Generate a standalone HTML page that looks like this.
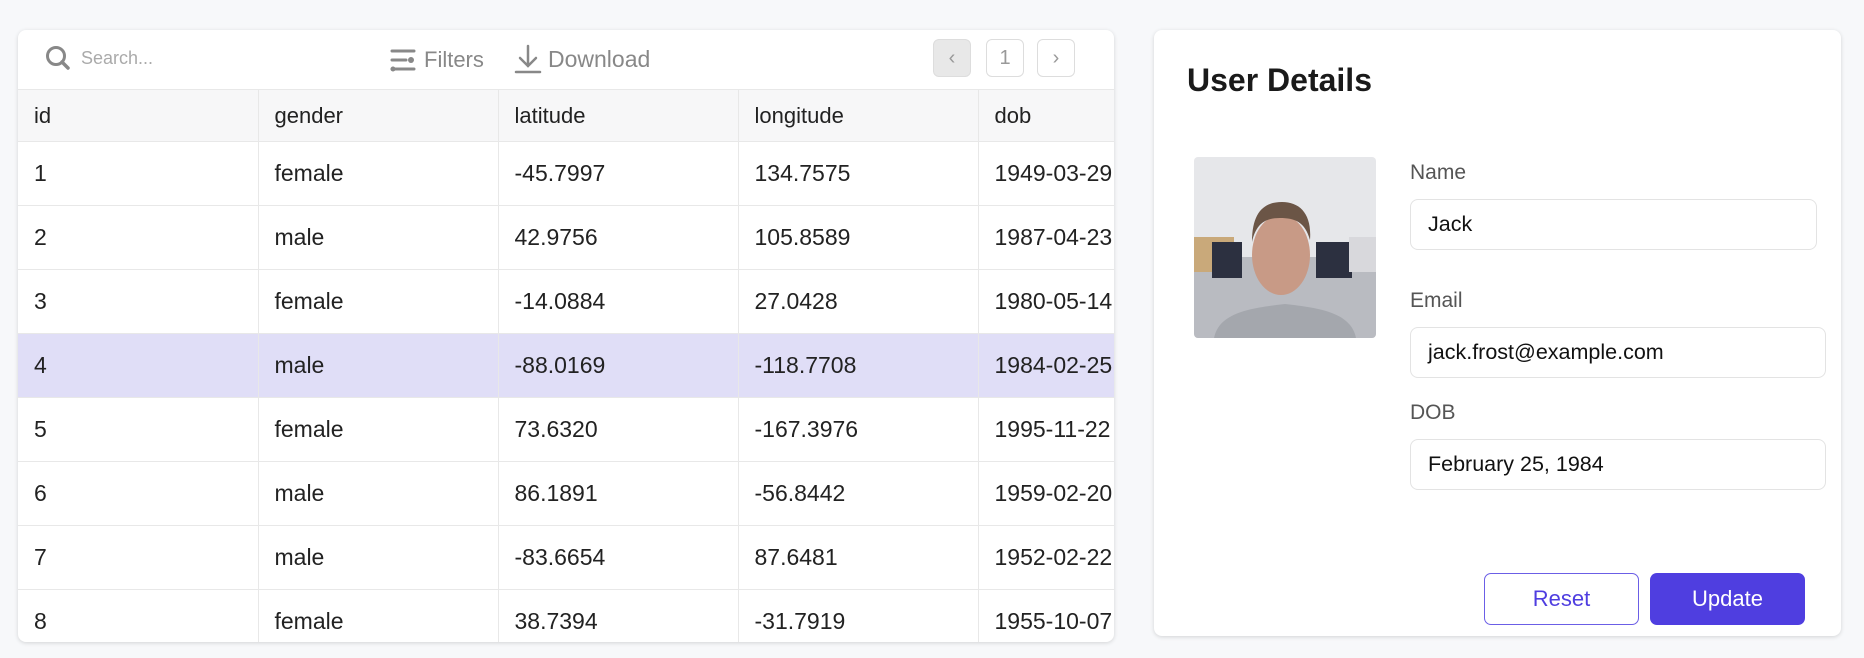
<!DOCTYPE html>
<html><head><style>
*{box-sizing:border-box;margin:0;padding:0}
body{width:1864px;height:658px;background:#f7f8fa;font-family:"Liberation Sans",sans-serif;position:relative;overflow:hidden;color:#222}
.card{position:absolute;background:#fff;border-radius:8px;box-shadow:0 1px 4px rgba(0,0,0,.15)}
#t{left:18px;top:30px;width:1096px;height:612px;overflow:hidden}
.tb{height:59px;position:relative;color:#888;font-size:22px}
table{border-collapse:collapse;table-layout:fixed;width:1120px;position:absolute;top:59px;left:0}
td{width:240px;border-right:1px solid #e8e8e8;border-bottom:1px solid #e8e8e8;padding-left:16px;font-size:23px;white-space:nowrap;overflow:hidden;height:64px;color:#222}
tr.h td{background:#f7f7f8;height:52px;border-top:1px solid #e8e8e8;font-size:22px;padding-top:0}
tr.s td{background:#e0def7}
.pb{position:absolute;top:9px;width:38px;height:38px;border:1px solid #ddd;border-radius:6px;display:flex;align-items:center;justify-content:center;color:#999;font-size:20px}
#d{left:1154px;top:30px;width:687px;height:606px}
.lab{position:absolute;left:256px;font-size:21px;color:#555}
.inp{position:absolute;left:256px;height:51px;border:1px solid #e3e3e3;border-radius:8px;font-size:21.5px;padding-left:17px;display:flex;align-items:center;color:#111}
.btn{position:absolute;top:543px;width:155px;height:52px;border-radius:7px;font-size:22px;display:flex;align-items:center;justify-content:center}
</style></head><body>
<div class="card" id="t">
<div class="tb">
<svg style="position:absolute;left:26px;top:14px" width="28" height="28" viewBox="0 0 28 28"><circle cx="12" cy="12" r="8.5" fill="none" stroke="#888" stroke-width="3"/><path d="M18 18l6 6" stroke="#888" stroke-width="3.5" stroke-linecap="round"/></svg>
<span style="position:absolute;left:63px;top:18px;font-size:18px;color:#aaa">Search...</span>
<svg style="position:absolute;left:372px;top:18px" width="26" height="24" viewBox="0 0 26 24"><g stroke="#888" stroke-width="3" stroke-linecap="round"><path d="M2 3h22M2 12h14M2 21h22"/></g><circle cx="21" cy="12" r="3" fill="#888"/><circle cx="3" cy="21" r="2.5" fill="#888"/></svg>
<span style="position:absolute;left:406px;top:17px">Filters</span>
<svg style="position:absolute;left:496px;top:14px" width="28" height="30" viewBox="0 0 28 30"><g stroke="#888" stroke-width="2.5" fill="none" stroke-linecap="round"><path d="M14 2v20M6 14l8 8 8-8M2 28h24"/></g></svg>
<span style="position:absolute;left:530px;top:16px;font-size:23px">Download</span>
<div class="pb" style="left:915px;background:#e8e8e8">‹</div>
<div class="pb" style="left:968px">1</div>
<div class="pb" style="left:1019px">›</div>
</div>
<table>
<tr class="h"><td>id</td><td>gender</td><td>latitude</td><td>longitude</td><td>dob</td></tr>
<tr><td>1</td><td>female</td><td>-45.7997</td><td>134.7575</td><td>1949-03-29</td></tr>
<tr><td>2</td><td>male</td><td>42.9756</td><td>105.8589</td><td>1987-04-23</td></tr>
<tr><td>3</td><td>female</td><td>-14.0884</td><td>27.0428</td><td>1980-05-14</td></tr>
<tr class="s"><td>4</td><td>male</td><td>-88.0169</td><td>-118.7708</td><td>1984-02-25</td></tr>
<tr><td>5</td><td>female</td><td>73.6320</td><td>-167.3976</td><td>1995-11-22</td></tr>
<tr><td>6</td><td>male</td><td>86.1891</td><td>-56.8442</td><td>1959-02-20</td></tr>
<tr><td>7</td><td>male</td><td>-83.6654</td><td>87.6481</td><td>1952-02-22</td></tr>
<tr><td>8</td><td>female</td><td>38.7394</td><td>-31.7919</td><td>1955-10-07</td></tr>
</table>
</div>
<div class="card" id="d">
<div style="position:absolute;left:33px;top:32px;font-size:32px;font-weight:bold;color:#1a1a1a">User Details</div>
<svg style="position:absolute;left:40px;top:127px;border-radius:4px" width="182" height="181" viewBox="0 0 182 181">
<rect width="182" height="181" fill="#e6e7ea"/><rect y="100" width="182" height="81" fill="#b9bbc1"/>
<rect x="0" y="80" width="40" height="35" fill="#c9a97a"/><rect x="18" y="85" width="30" height="36" fill="#2c3040"/><rect x="122" y="85" width="36" height="36" fill="#2c3040"/><rect x="155" y="80" width="27" height="35" fill="#d8d8dc"/>
<path d="M20 181c5-25 35-30 71-34 36 4 66 9 71 34z" fill="#a4a7ad"/>
<ellipse cx="87" cy="98" rx="29" ry="40" fill="#c89a86"/><path d="M58 85c0-30 12-40 30-40s30 12 28 38c-5-18-15-22-30-22s-24 6-28 24z" fill="#6b5546"/>
</svg>
<div class="lab" style="top:131px">Name</div>
<div class="inp" style="top:169px;width:407px">Jack</div>
<div class="lab" style="top:259px">Email</div>
<div class="inp" style="top:297px;width:416px">jack.frost@example.com</div>
<div class="lab" style="top:371px">DOB</div>
<div class="inp" style="top:409px;width:416px">February 25, 1984</div>
<div class="btn" style="left:330px;border:1.5px solid #6b5ee6;color:#4f3ee0">Reset</div>
<div class="btn" style="left:496px;background:#4f3ee0;color:#fff">Update</div>
</div>
</body></html>
